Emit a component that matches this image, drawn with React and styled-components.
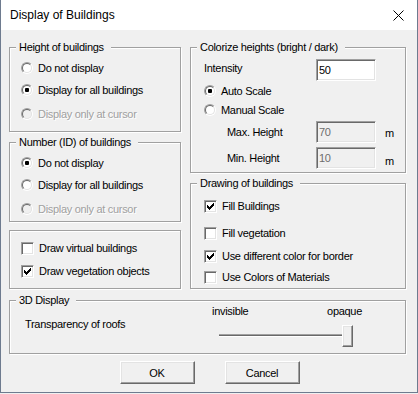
import React from 'react'
import styled, { createGlobalStyle } from 'styled-components'

const GlobalStyle = createGlobalStyle`
  html, body {
    margin: 0;
    padding: 0;
    background: #f0f0f0;
  }
  * {
    box-sizing: border-box;
  }
`

const Window = styled.div`
  width: 418px;
  height: 393px;
  border: 1px solid #6e7b8f;
  border-top: none;
  background: #f0f0f0;
  font-family: 'Liberation Sans', Arial, sans-serif;
  font-size: 11px;
  letter-spacing: -0.3px;
  color: #000;
  display: flex;
  flex-direction: column;
`

const TitleBar = styled.div`
  height: 30px;
  flex: none;
  background: #fff;
  display: flex;
  align-items: center;
  justify-content: space-between;
  padding-left: 9px;
  padding-right: 13px;
`

const Title = styled.span`
  font-size: 12px;
  letter-spacing: 0;
`

const CloseIcon = () => (
  <svg width="11" height="11" viewBox="0 0 11 11">
    <path d="M0.5 0.5 L10.5 10.5 M10.5 0.5 L0.5 10.5" stroke="#000" strokeWidth="1" />
  </svg>
)

const Body = styled.div`
  padding: 17px 11px 0 8px;
  display: flex;
  flex-direction: column;
`

const Columns = styled.div`
  display: grid;
  grid-template-columns: 172px 216px;
  column-gap: 9px;
`

const Column = styled.div`
  display: flex;
  flex-direction: column;
`

const Group = styled.div`
  position: relative;
  height: ${({ $h }) => $h}px;
  margin-top: ${({ $mt }) => $mt || 0}px;
  border: 1px solid #a0a0a0;
  box-shadow: inset 1px 1px 0 #fff, 1px 1px 0 #fff;
  display: flex;
  flex-direction: column;
  padding-left: ${({ $pl }) => $pl || 0}px;
`

const Legend = styled.span`
  position: absolute;
  top: -7px;
  left: 6px;
  padding: 0 7px 0 3px;
  line-height: 13px;
  background: #f0f0f0;
`

const OptionRow = styled.div`
  height: 20px;
  margin-top: ${({ $mt }) => $mt || 0}px;
  display: flex;
  align-items: center;
`

const Label = styled.span`
  margin-left: ${({ $gap }) => $gap || 5}px;
  color: ${({ $disabled }) => ($disabled ? '#a0a0a0' : '#000')};
  text-shadow: ${({ $disabled }) => ($disabled ? '1px 1px 0 #fff' : 'none')};
`

const RadioOuter = styled.span`
  width: 12px;
  height: 12px;
  flex: none;
  border-radius: 50%;
  border: 1px solid;
  border-color: #a0a0a0 #fff #fff #a0a0a0;
  display: flex;
  align-items: center;
  justify-content: center;
`

const RadioInner = styled.span`
  width: 10px;
  height: 10px;
  border-radius: 50%;
  border: 1px solid;
  border-color: #696969 #e3e3e3 #e3e3e3 #696969;
  background: ${({ $disabled }) => ($disabled ? '#f0f0f0' : '#fff')};
  display: flex;
  align-items: center;
  justify-content: center;
`

const RadioDot = styled.span`
  width: 4px;
  height: 4px;
  border-radius: 1px;
  background: #000;
`

const Radio = ({ checked, disabled, children }) => (
  <>
    <RadioOuter>
      <RadioInner $disabled={disabled}>{checked && <RadioDot />}</RadioInner>
    </RadioOuter>
    <Label $disabled={disabled}>{children}</Label>
  </>
)

const CheckBox = styled.span`
  width: 13px;
  height: 13px;
  flex: none;
  border: 1px solid;
  border-color: #a0a0a0 #fff #fff #a0a0a0;
  box-shadow: inset 1px 1px 0 #696969, inset -1px -1px 0 #e3e3e3;
  background: #fff;
  display: flex;
  align-items: center;
  justify-content: center;
`

const checkTops = [2, 3, 4, 3, 2, 1, 0]

const CheckMark = () => (
  <svg width="7" height="7" viewBox="0 0 7 7" shapeRendering="crispEdges">
    {checkTops.map((t, i) => (
      <rect key={i} x={i} y={t} width="1" height="3" fill="#000" />
    ))}
  </svg>
)

const Check = ({ checked, children }) => (
  <>
    <CheckBox>{checked && <CheckMark />}</CheckBox>
    <Label $gap={5}>{children}</Label>
  </>
)

const FieldRow = styled.div`
  display: flex;
  align-items: center;
  height: 22px;
  margin-top: ${({ $mt }) => $mt || 0}px;
`

const FieldLabel = styled.span`
  width: ${({ $w }) => $w}px;
  padding-left: ${({ $indent }) => $indent || 0}px;
  flex: none;
  margin-top: ${({ $up }) => ($up ? -4 : 0)}px;
`

const Field = styled.input`
  width: 60px;
  height: 22px;
  flex: none;
  margin: 0;
  padding: 0 2px;
  border: 1px solid;
  border-color: #a0a0a0 #fff #fff #a0a0a0;
  box-shadow: inset 1px 1px 0 #696969, inset -1px -1px 0 #e3e3e3;
  background: ${({ $disabled }) => ($disabled ? '#f0f0f0' : '#fff')};
  color: ${({ $disabled }) => ($disabled ? '#6d6d6d' : '#000')};
  font-family: 'Liberation Sans', Arial, sans-serif;
  font-size: 11px;
  letter-spacing: -0.3px;
  outline: none;
`

const Unit = styled.span`
  margin-left: 9px;
  margin-top: ${({ $down }) => $down || 0}px;
`

const ScaleRow = styled.div`
  height: 19px;
  display: flex;
  align-items: center;
  padding-left: 13px;
`

const Display3D = styled(Group)`
  margin-top: 11px;
  flex-direction: row;
`

const RoofLabel = styled.span`
  width: 202px;
  padding: 17px 0 0 15px;
  flex: none;
`

const SliderBlock = styled.div`
  width: 150px;
  padding-top: 4px;
  display: flex;
  flex-direction: column;
`

const SliderLabels = styled.div`
  display: flex;
  justify-content: space-between;
  line-height: 13px;
`

const SliderBody = styled.div`
  margin-top: 7px;
  display: flex;
  align-items: flex-start;
`

const Track = styled.div`
  width: 124px;
  height: 3px;
  margin: 9px 0 0 7px;
  border-top: 1px solid #a0a0a0;
  border-bottom: 1px solid #fff;
  background: #696969;
`

const Thumb = styled.div`
  width: 11px;
  height: 22px;
  margin-left: -1px;
  border: 1px solid;
  border-color: #fff #696969 #696969 #fff;
  box-shadow: inset -1px -1px 0 #a0a0a0, inset 1px 1px 0 #e3e3e3;
  background: #f0f0f0;
`

const Buttons = styled.div`
  margin-top: 7px;
  padding-left: 4px;
  display: flex;
  justify-content: center;
  gap: 30px;
`

const Button = styled.button`
  width: 75px;
  height: 23px;
  padding: 0;
  border: 1px solid;
  border-color: #fff #696969 #696969 #fff;
  box-shadow: inset -1px -1px 0 #a0a0a0, inset 1px 1px 0 #e3e3e3;
  background: #f0f0f0;
  font-family: 'Liberation Sans', Arial, sans-serif;
  font-size: 11px;
  letter-spacing: -0.3px;
  color: #000;
`

const App = () => (
  <Window>
    <GlobalStyle />
    <TitleBar>
      <Title>Display of Buildings</Title>
      <CloseIcon />
    </TitleBar>
    <Body>
      <Columns>
        <Column>
          <Group $h={85} $pl={11}>
            <Legend>Height of buildings</Legend>
            <OptionRow $mt={10}>
              <Radio>Do not display</Radio>
            </OptionRow>
            <OptionRow $mt={2}>
              <Radio checked>Display for all buildings</Radio>
            </OptionRow>
            <OptionRow $mt={4}>
              <Radio disabled>Display only at cursor</Radio>
            </OptionRow>
          </Group>
          <Group $h={80} $mt={10} $pl={11}>
            <Legend>Number (ID) of buildings</Legend>
            <OptionRow $mt={10}>
              <Radio checked>Do not display</Radio>
            </OptionRow>
            <OptionRow $mt={2}>
              <Radio>Display for all buildings</Radio>
            </OptionRow>
            <OptionRow $mt={4}>
              <Radio disabled>Display only at cursor</Radio>
            </OptionRow>
          </Group>
          <Group $h={59} $mt={8} $pl={11}>
            <OptionRow $mt={7}>
              <Check>Draw virtual buildings</Check>
            </OptionRow>
            <OptionRow $mt={3}>
              <Check checked>Draw vegetation objects</Check>
            </OptionRow>
          </Group>
        </Column>
        <Column>
          <Group $h={126}>
            <Legend>Colorize heights (bright / dark)</Legend>
            <FieldRow $mt={11}>
              <FieldLabel $w={125} $indent={13} $up>
                Intensity
              </FieldLabel>
              <Field readOnly defaultValue="50" />
            </FieldRow>
            <ScaleRow>
              <Radio checked>Auto Scale</Radio>
            </ScaleRow>
            <ScaleRow>
              <Radio>Manual Scale</Radio>
            </ScaleRow>
            <FieldRow $mt={2}>
              <FieldLabel $w={125} $indent={36}>
                Max. Height
              </FieldLabel>
              <Field readOnly $disabled defaultValue="70" />
              <Unit $down={1}>m</Unit>
            </FieldRow>
            <FieldRow $mt={4}>
              <FieldLabel $w={125} $indent={36}>
                Min. Height
              </FieldLabel>
              <Field readOnly $disabled defaultValue="10" />
              <Unit $down={5}>m</Unit>
            </FieldRow>
          </Group>
          <Group $h={106} $mt={10} $pl={13}>
            <Legend>Drawing of buildings</Legend>
            <OptionRow $mt={12}>
              <Check checked>Fill Buildings</Check>
            </OptionRow>
            <OptionRow $mt={7}>
              <Check>Fill vegetation</Check>
            </OptionRow>
            <OptionRow $mt={3}>
              <Check checked>Use different color for border</Check>
            </OptionRow>
            <OptionRow $mt={1}>
              <Check>Use Colors of Materials</Check>
            </OptionRow>
          </Group>
        </Column>
      </Columns>
      <Display3D $h={54}>
        <Legend>3D Display</Legend>
        <RoofLabel>Transparency of roofs</RoofLabel>
        <SliderBlock>
          <SliderLabels>
            <span>invisible</span>
            <span>opaque</span>
          </SliderLabels>
          <SliderBody>
            <Track />
            <Thumb />
          </SliderBody>
        </SliderBlock>
      </Display3D>
      <Buttons>
        <Button>OK</Button>
        <Button>Cancel</Button>
      </Buttons>
    </Body>
  </Window>
)

export default App
